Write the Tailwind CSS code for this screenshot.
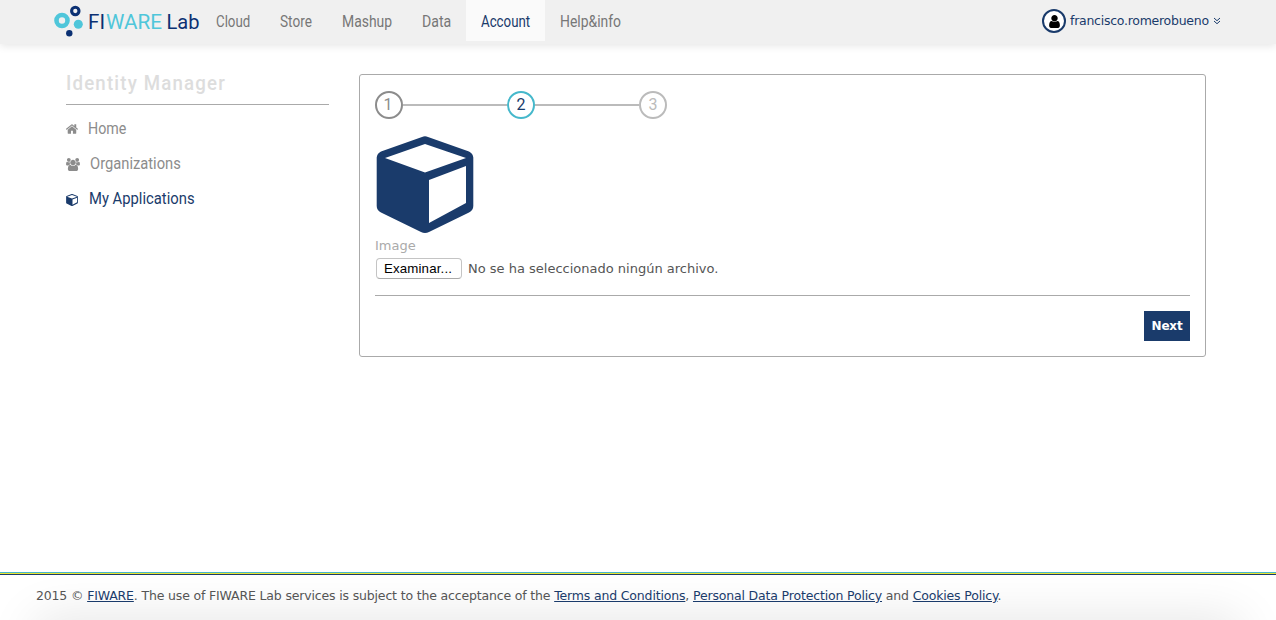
<!DOCTYPE html>
<html lang="en">
<head>
<meta charset="utf-8">
<title>FIWARE Lab - Identity Manager</title>
<script src="https://cdn.jsdelivr.net/npm/@tailwindcss/browser@4"></script>
</head>
<body class="bg-white font-['DejaVu_Sans',sans-serif] text-[#555]">
<div class="flex h-[620px] w-[1276px] flex-col overflow-hidden">
  <header class="flex h-11 shrink-0 items-start bg-[#f0f0f0] pl-[53px] pr-[55px] shadow-[0_2px_8px_rgba(0,0,0,0.1)]">
    <svg class="h-11 w-[148px] shrink-0" viewBox="53 0 148 44" font-family="Roboto, sans-serif" font-size="20.5">
      <circle cx="62" cy="20.500" r="5.500" fill="none" stroke="#4fc6da" stroke-width="4.600"/>
      <circle cx="75.300" cy="11" r="3.700" fill="none" stroke="#0b3073" stroke-width="3.100"/>
      <circle cx="78.300" cy="24.200" r="4.500" fill="#4fc6da"/>
      <circle cx="69.300" cy="33.200" r="3.200" fill="#0b3073"/>
      <text x="88" y="28.500" fill="#0b3073" textLength="17" lengthAdjust="spacingAndGlyphs">FI</text>
      <text x="106" y="28.500" fill="#4fc6da" textLength="56" lengthAdjust="spacingAndGlyphs">WARE</text>
      <text x="166.500" y="28.500" fill="#0b3073" textLength="33" lengthAdjust="spacingAndGlyphs">Lab</text>
    </svg>
    <nav class="flex h-[41px] font-[Roboto,sans-serif] text-[16px] leading-[43px] whitespace-nowrap text-[#777]">
      <a class="w-16 pl-[15px]"><span class="inline-block origin-left scale-x-[.83]">Cloud</span></a>
      <a class="w-[62px] pl-[15px]"><span class="inline-block origin-left scale-x-[.85]">Store</span></a>
      <a class="w-20 pl-[15px]"><span class="inline-block origin-left scale-x-[.87]">Mashup</span></a>
      <a class="w-[59px] pl-[15px]"><span class="inline-block origin-left scale-x-[.88]">Data</span></a>
      <a class="w-[79px] bg-[#fafafa] pl-[15px] text-[#1a3b6b]"><span class="inline-block origin-left scale-x-[.83]">Account</span></a>
      <a class="w-[90px] pl-[15px]"><span class="inline-block origin-left scale-x-[.87]">Help&amp;info</span></a>
    </nav>
    <div class="ml-auto flex h-[42px] items-center text-[13px] text-[#1a3b6b]">
      <span class="flex size-6 items-center justify-center rounded-full border-2 border-[#1a3b6b] bg-white">
        <svg class="size-[15px]" viewBox="0 0 1792 1792"><path d="M1536 1399q0 109-62.500 187t-150.500 78h-854q-88 0-150.500-78t-62.500-187q0-85 8.500-160.500t31.500-152 58.500-131 94-89 134.500-34.500q131 128 313 128t313-128q76 0 134.500 34.500t94 89 58.500 131 31.500 152 8.500 160.500zm-256-887q0 159-112.500 271.500t-271.500 112.500-271.500-112.500-112.500-271.500 112.500-271.500 271.500-112.500 271.500 112.500 112.500 271.500z"/></svg>
      </span>
      <span class="ml-1 w-[139px] text-[12.5px] tracking-[-0.26px] whitespace-nowrap">francisco.romerobueno</span>
      <svg class="ml-1 h-2 w-[8px]" viewBox="0 0 8 8" fill="none" stroke="#1a3b6b" stroke-width="1"><path d="M1 1l3 2.700L7 1M1 4l3 2.700L7 4"/></svg>
    </div>
  </header>

  <main class="flex flex-1 pl-[66px] pt-[30px]">
    <aside class="w-[263px] shrink-0 font-[Roboto,sans-serif] text-[16px] text-[#8c8c8c]">
      <h1 class="h-[31px] border-b border-[#aaa] text-[20.5px] leading-[18px] font-medium tracking-[1.300px] whitespace-nowrap text-[#ddd]"><span class="inline-block origin-left scale-x-[.91]">Identity Manager</span></h1>
      <ul class="flex flex-col pt-[6px] whitespace-nowrap">
        <li class="flex h-[35px] items-center">
          <svg class="mt-px size-[12px]" viewBox="90 90 1620 1620" fill="#8c8c8c"><path d="M1472 992v480q0 26-19 45t-45 19h-384v-384h-256v384h-384q-26 0-45-19t-19-45v-480q0-1 .5-3t.5-3l575-474 575 474q1 2 1 6zm223-69l-62 74q-8 9-21 11h-3q-13 0-21-7l-692-577-692 577q-12 8-24 7-13-2-21-11l-62-74q-8-10-7-23.500t11-21.500l719-599q32-26 76-26t76 26l244 204v-195q0-14 9-23t23-9h192q14 0 23 9t9 23v408l219 182q10 8 11 21.500t-7 23.500z"/></svg>
          <span class="ml-[10px] origin-left scale-x-[.89]">Home</span>
        </li>
        <li class="flex h-[35px] items-center">
          <svg class="mt-0.5 h-[13px] w-[14px]" viewBox="64 0 1920 1792" fill="#8c8c8c"><path d="M657 896q-162 5-265 128h-134q-82 0-138-40.500t-56-118.500q0-353 124-353 6 0 43.500 21t97.500 42.500 119 21.500q67 0 133-23-5 37-5 66 0 139 81 256zm1071 637q0 120-73 189.500t-194 69.500h-874q-121 0-194-69.500t-73-189.500q0-53 3.500-103.500t14-109 26.500-108.500 43-97.500 62-81 85.500-53.500 111.500-20q10 0 43 21.500t73 48 107 48 135 21.500 135-21.500 107-48 73-48 43-21.500q61 0 111.500 20t85.500 53.500 62 81 43 97.500 26.500 108.500 14 109 3.500 103.500zm-1024-1277q0 106-75 181t-181 75-181-75-75-181 75-181 181-75 181 75 75 181zm704 384q0 159-112.500 271.500t-271.500 112.500-271.500-112.500-112.500-271.500 112.500-271.500 271.500-112.500 271.500 112.500 112.500 271.500zm576 225q0 78-56 118.500t-138 40.500h-134q-103-123-265-128 81-117 81-256 0-29-5-66 66 23 133 23 59 0 119-21.500t97.500-42.500 43.500-21q124 0 124 353zm-128-609q0 106-75 181t-181 75-181-75-75-181 75-181 181-75 181 75 75 181z"/></svg>
          <span class="ml-[9.5px] origin-left scale-x-[.92]">Organizations</span>
        </li>
        <li class="flex h-[35px] items-center text-[#1a3b6b]">
          <svg class="mt-[3px] size-[12px]" viewBox="0 0 98 98"><path fill="#1a3b6b" fill-rule="evenodd" d="M46 1Q49 0 52 1L93 16Q97 18 97 22V71Q97 75 93 77L53 97Q49 99 45 97L5 77Q1 75 1 71V22Q1 18 5 16ZM9 22L49 37L90 22L49 8ZM53 44V87L90 67V30Z"/></svg>
          <span class="ml-[11px] origin-left scale-x-[.925]">My Applications</span>
        </li>
      </ul>
    </aside>

    <section class="ml-[30px] flex h-[283px] w-[847px] flex-col rounded-[3px] border border-[#aaa] px-[15px] pt-4">
      <div class="flex items-center font-[Roboto,sans-serif] text-[16px]">
        <span class="flex size-7 items-center justify-center rounded-full border-2 border-[#8c8c8c] pr-0.5 text-[#8c8c8c]">1</span>
        <span class="h-0.5 w-[104px] bg-[#bbb]"></span>
        <span class="flex size-7 items-center justify-center rounded-full border-2 border-[#45b8cb] text-[#1a3b6b]">2</span>
        <span class="h-0.5 w-[104px] bg-[#bbb]"></span>
        <span class="flex size-7 items-center justify-center rounded-full border-2 border-[#bbb] text-[#bbb]">3</span>
      </div>
      <svg class="ml-px mt-[17px] size-[98px] shrink-0" viewBox="0 0 98 98"><path fill="#1a3b6b" fill-rule="evenodd" d="M46 1Q49 -0.500 52 1L93 15.500Q97 17.500 97.300 21.500V70Q97.300 74 93 76.500L53 96Q49 98 45 96L5 76.500Q.7 74 .7 70V21.500Q1 17.500 5 15.500ZM9 22L49 36.500L90 22L49 8ZM53 44V87L90 67V30Z"/></svg>
      <label class="mt-[3px] h-[18px] text-[13px] leading-[18px] text-[#aaa]">Image</label>
      <div class="mt-[3px] flex h-[21px] items-center pl-px">
        <button class="h-[21px] w-[86px] rounded-[4px] border border-[#c4c4c4] border-b-[#aaa] bg-white pr-0.5 font-['Liberation_Sans',sans-serif] text-[13.3px] leading-[18px] tracking-[0.15px] whitespace-nowrap text-black">Examinar...</button>
        <span class="ml-1.5 text-[13px] whitespace-nowrap">No se ha seleccionado ningún archivo.</span>
      </div>
      <div class="mt-4 flex justify-end border-t border-[#aaa] pt-[15px]">
        <button class="h-[30px] w-[46px] bg-[#1a3b6b] text-[12px] font-bold tracking-[-0.2px] text-white">Next</button>
      </div>
    </section>
  </main>

  <footer class="h-12 shrink-0">
    <div class="h-px bg-[#45b8cb]"></div>
    <div class="h-px bg-[#eee52d]"></div>
    <div class="h-px bg-[#1a3b6b]"></div>
    <div class="relative h-[45px] overflow-hidden">
      <div class="absolute inset-x-9 top-[45px] h-10 shadow-[0_0_50px_rgba(0,0,0,0.12)]"></div>
      <p class="relative pl-9 text-[12.5px] leading-[42px] tracking-[-0.163px] whitespace-nowrap">2015 © <a class="text-[#1a3b6b] underline">FIWARE</a>. The use of FIWARE Lab services is subject to the acceptance of the <a class="text-[#1a3b6b] underline">Terms and Conditions</a>, <a class="text-[#1a3b6b] underline">Personal Data Protection Policy</a> and <a class="text-[#1a3b6b] underline">Cookies Policy</a>.</p>
    </div>
  </footer>
</div>
</body>
</html>
